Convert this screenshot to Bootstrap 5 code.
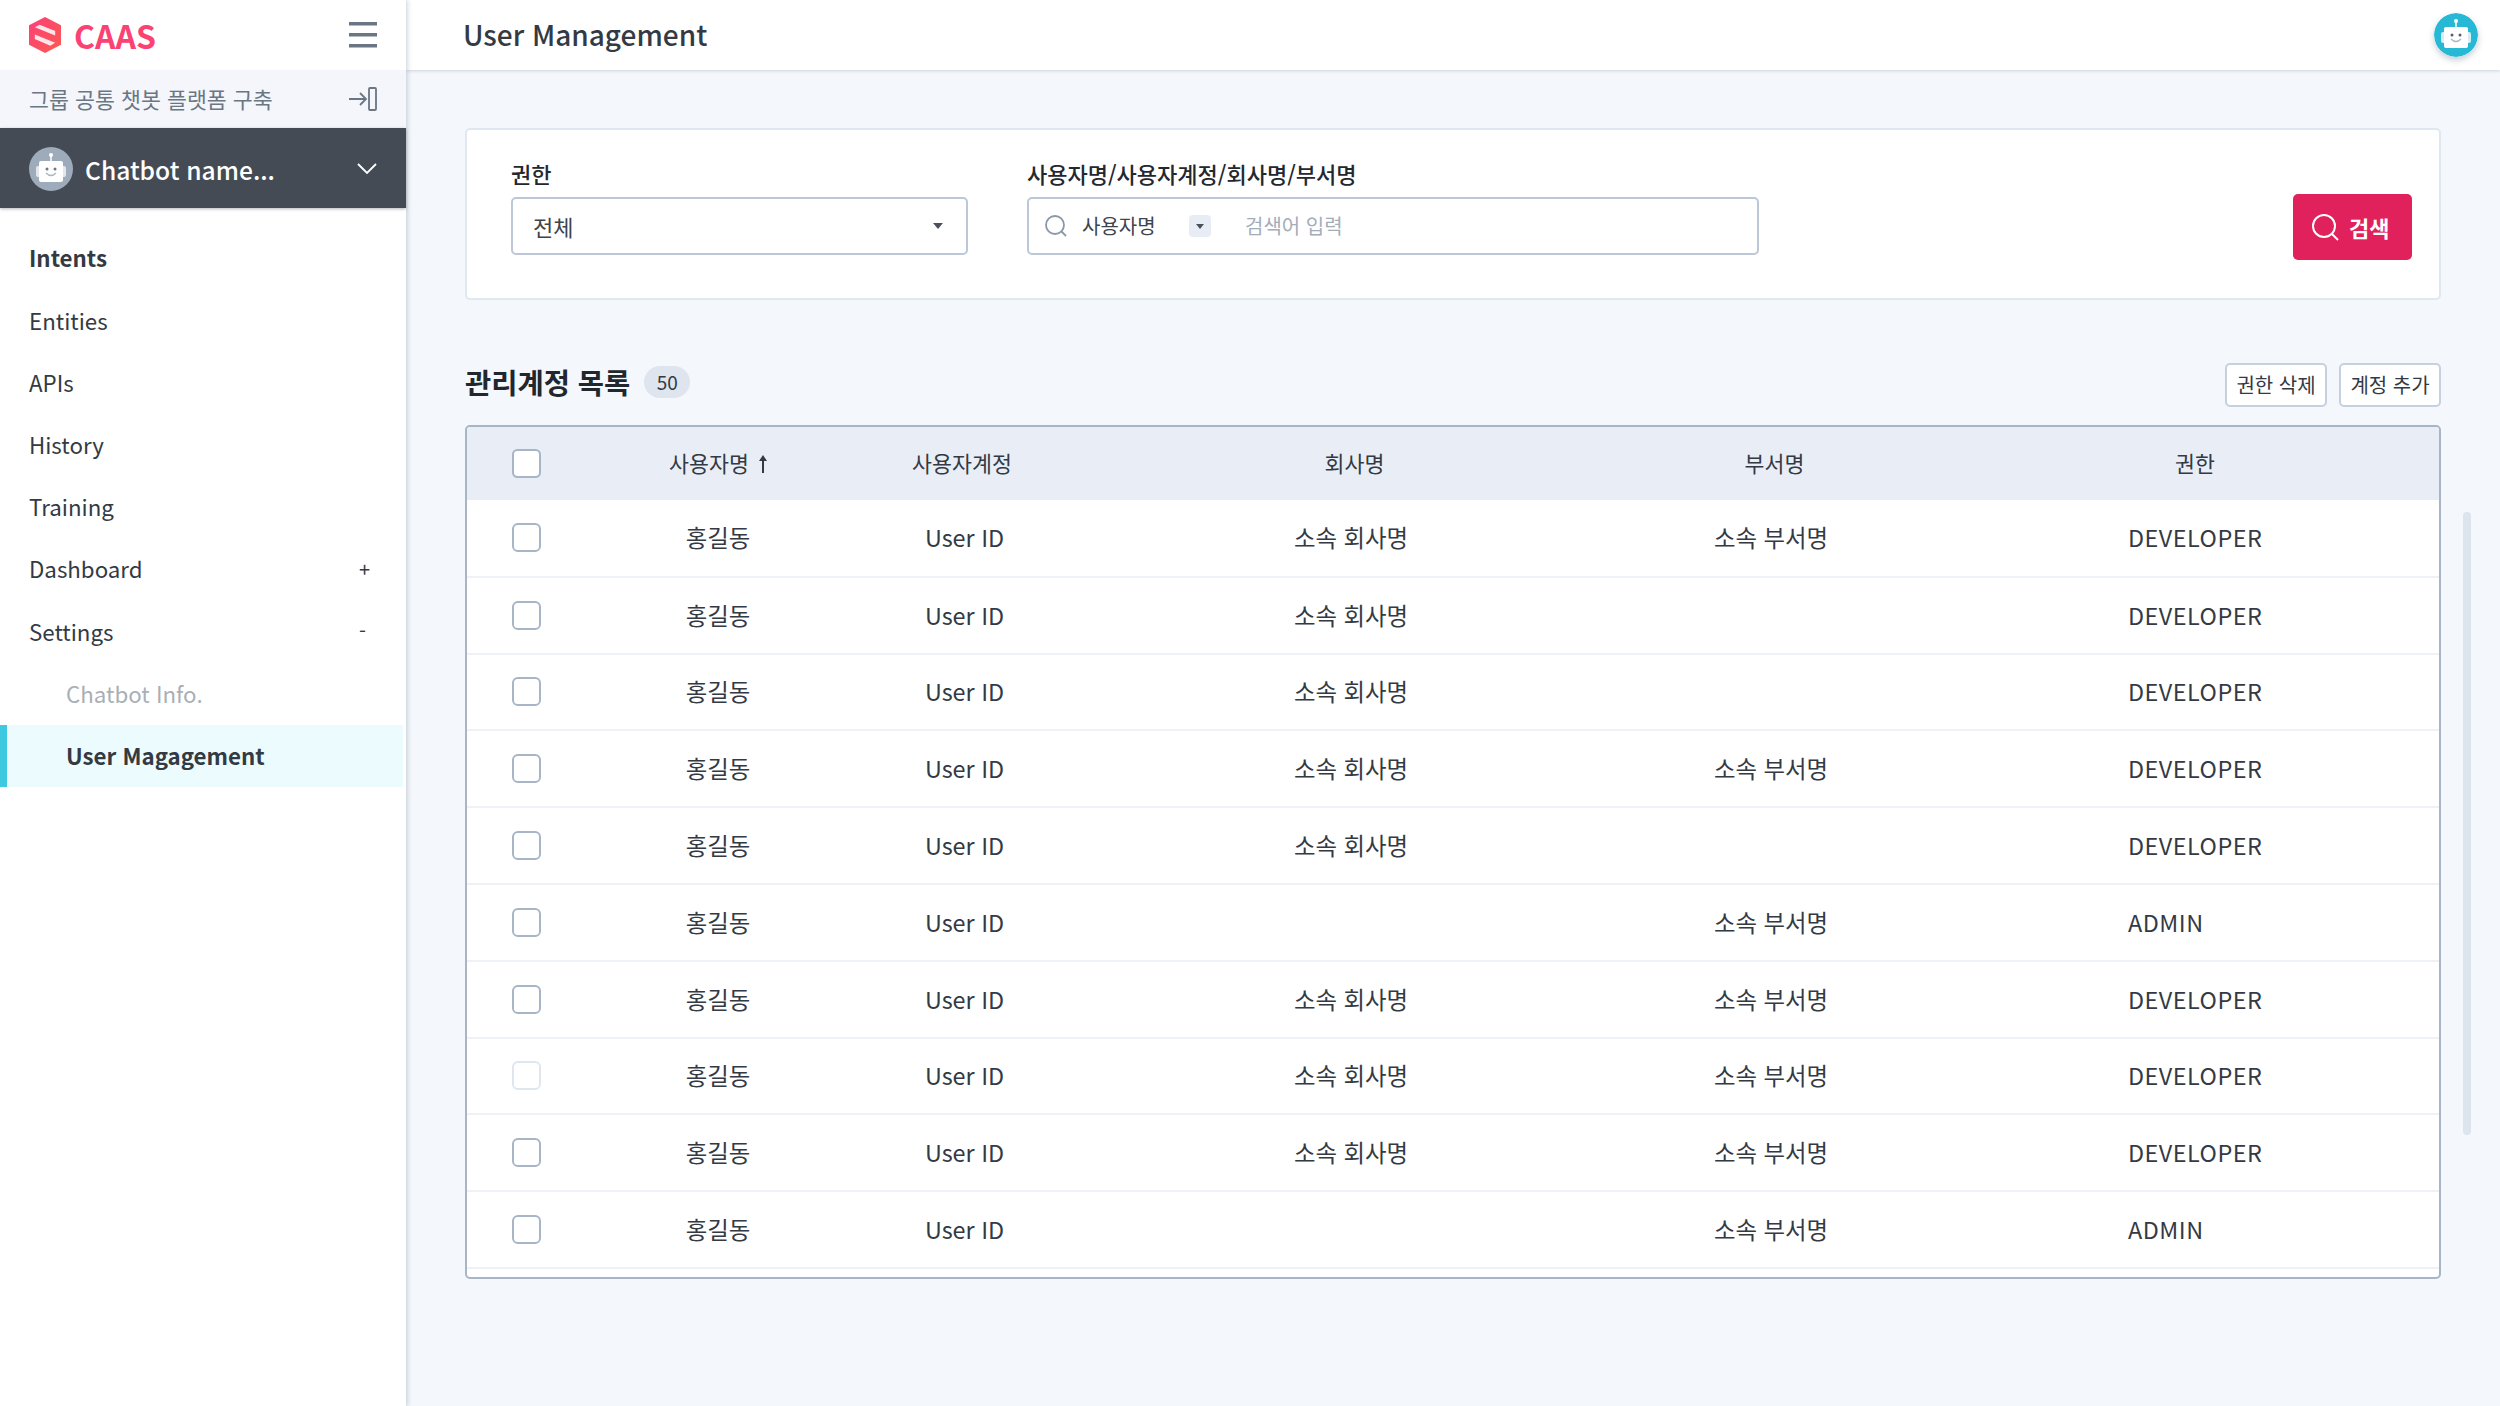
<!DOCTYPE html>
<html lang="ko">
<head>
<meta charset="utf-8">
<title>User Management</title>
<link href="https://cdn.jsdelivr.net/npm/bootstrap@5.3.0/dist/css/bootstrap.min.css" rel="stylesheet">
<style>
html,body{height:100%;}
body{font-family:"Noto Sans CJK KR","Noto Sans",sans-serif;background:#f4f7fb;color:#333a44;overflow:hidden;}
.shell{width:2500px;height:1406px;}
.side{width:406px;flex:none;background:#fff;box-shadow:2px 0 4px rgba(120,135,155,.3);z-index:3;}
.brand{height:70px;padding:0 29px;}
.brand-name{font-size:32px;font-weight:700;color:#fb4273;margin-left:13px;line-height:1;}
.project{height:58px;padding:0 29px;background:#f4f6fb;font-size:21.7px;color:#6b7683;}
.bot-pick{height:80px;padding:2px 29px 0;background:#454b55;color:#fff;font-size:24.600px;font-weight:500;box-shadow:0 1px 3px rgba(60,70,85,.4);}
.bot-pick span{margin-left:12px;}
.menu{padding-top:19px;}
.menu-row{height:62.2px;padding:0 34px 0 29px;font-size:22.3px;color:#333a44;}
.menu-row.strong{font-weight:700;}
.menu-row.sub{padding-left:66px;color:#a9afb6;}
.menu-row.on{padding-left:59px;font-weight:700;background:#ecfbfd;border-left:7px solid #3ec9e0;margin-right:3px;}
.menu-sign{font-size:20px;width:13px;text-align:left;}
.topbar{height:70px;padding:0 22px 0 57px;background:#fff;box-shadow:0 1px 3px rgba(120,135,155,.3);}
.topbar h1{font-size:28px;font-weight:500;margin:0;color:#333a44;}
.robot{width:44px;height:44px;border-radius:50%;box-shadow:0 3px 6px rgba(60,90,110,.3);flex:none;}
.work{padding:58px 59px 0 59px;position:relative;}
.filter{height:172px;background:#fff;border:2px solid #dfe7f0;border-radius:5px;padding:28px 27px 0 44px;}
.fld-a{width:457px;margin-right:59px;}
.fld-b{width:732px;}
.fld-lab{font-size:22px;font-weight:500;color:#23282f;line-height:30px;margin:0 0 9px;}
.pick,.seek{height:58px;background:#fff;border:2px solid #bcc8d8;border-radius:5px;font-size:22px;color:#3d444d;}
.pick{padding:0 23px 0 20px;}
.tri{width:0;height:0;border-left:5px solid transparent;border-right:5px solid transparent;border-top:6px solid #4a515b;}
.seek{padding:0 0 0 15px;font-size:20px;}
.seek-kind{margin-left:14px;width:107px;}
.tri-box{width:22px;height:22px;background:#e8edf5;border-radius:4px;}
.tri-box .tri{border-left-width:4px;border-right-width:4px;border-top-width:5px;}
.seek-hint{margin-left:34px;color:#a3adb9;}
.go{width:119px;height:66px;margin-left:auto;margin-top:36px;background:#e0215c;border:0;border-radius:5px;color:#fff;font-size:22px;font-weight:700;padding:0 0 0 19px;gap:10px;}
.go:hover{background:#e0215c;color:#fff;}
.list-head{margin-top:63px;height:44px;margin-bottom:18px;}
.list-head h2{font-size:28.5px;font-weight:700;color:#22272e;margin:0 0 6px;}
.tally{height:32px;width:46px;background:#dfe5ef;border-radius:16px;font-size:19px;color:#333a44;margin:0 0 6px 14px;}
.ghost{height:44px;width:102px;padding:0;background:#fff;border:2px solid #c6d1df;border-radius:5px;font-size:20px;color:#333a44;}
.grid-box{height:854px;background:#fff;border:2px solid #a7b5c7;border-radius:5px;overflow:hidden;}
.grid-box table{table-layout:fixed;width:1972px;margin:0;}
.grid-box th,.grid-box td{padding:0;text-align:center;vertical-align:middle;font-size:23.4px;color:#333a44;font-weight:400;border-bottom:2px solid #eef2f7;}
.grid-box thead th{height:73px;background:#e9eef6;font-size:21.7px;border-bottom:0;}
.grid-box tbody td{height:76.8px;}
.grid-box th:first-child,.grid-box td:first-child{text-align:left;padding-left:45px;}
.grid-box td.uid{padding-left:5px;}
.grid-box th.nudge{padding-left:5px;}
.grid-box td.firm{padding-right:2px;}
.grid-box td.role{text-align:left;padding-left:177px;letter-spacing:.5px;}
.sort-arrow{margin-left:10px;vertical-align:-1px;}
.tick{width:29px;height:29px;background:#fff;border:2px solid #a7b5c7;border-radius:4px;margin:0;display:block;}
.tick.faint{border-color:#dfe6ef;}
.thumb{position:absolute;left:2057px;top:442px;width:8px;height:623px;background:#dce4ee;border-radius:4px;}
</style>
</head>
<body>
<div class="shell d-flex">
  <aside class="side d-flex flex-column">
    <div class="brand d-flex align-items-center">
      <svg width="32" height="36" viewBox="0 0 33 37"><defs><linearGradient id="lg" x1="0" y1="0" x2="1" y2="1"><stop offset="0" stop-color="#fb3f78"/><stop offset="1" stop-color="#fd5a50"/></linearGradient></defs><path d="M16.500 0 33 8.500v20L16.500 37 0 28.500v-20z" fill="url(#lg)"/><path d="M6 10.500 11 8 27 14.500V19zM6 18 27 26.500 22 29.500 6 22.500z" fill="#fff" opacity=".85"/></svg>
      <div class="brand-name">CAAS</div>
      <svg class="ms-auto" width="28" height="26" viewBox="0 0 28 26" fill="#6a7683"><rect y="0" width="28" height="3.500"/><rect y="11" width="28" height="3.500"/><rect y="22" width="28" height="3.500"/></svg>
    </div>
    <div class="project d-flex align-items-center justify-content-between">
      <span>그룹 공통 챗봇 플랫폼 구축</span>
      <svg width="28" height="24" viewBox="0 0 28 24" fill="none" stroke="#6a7683" stroke-width="1.800"><path d="M0 12h17M11 6l6 6-6 6"/><rect x="20" y="1" width="7" height="22" rx="1"/></svg>
    </div>
    <div class="bot-pick d-flex align-items-center">
      <svg width="44" height="44" viewBox="0 0 44 44"><circle cx="22" cy="22" r="22" fill="#9dabbb"/><path d="M22 8v6" stroke="#fff" stroke-width="1.500"/><circle cx="22" cy="8" r="2" fill="#fff"/><rect x="7" y="19" width="30" height="11" rx="2" fill="#e2e7ed"/><rect x="10" y="14" width="24" height="21" rx="2" fill="#fff"/><circle cx="18" cy="22" r="1.500" fill="#6d7684"/><circle cx="26" cy="22" r="1.500" fill="#6d7684"/><path d="M17 26q5 5 10 0" stroke="#a9b6c4" stroke-width="1.300" fill="none"/></svg>
      <span>Chatbot name...</span>
      <svg class="ms-auto" width="20" height="12" viewBox="0 0 20 12" fill="none" stroke="#fff" stroke-width="1.800"><path d="M1 1l9 9 9-9"/></svg>
    </div>
    <nav class="menu">
      <div class="menu-row strong d-flex align-items-center">Intents</div>
      <div class="menu-row d-flex align-items-center">Entities</div>
      <div class="menu-row d-flex align-items-center">APIs</div>
      <div class="menu-row d-flex align-items-center">History</div>
      <div class="menu-row d-flex align-items-center">Training</div>
      <div class="menu-row d-flex align-items-center justify-content-between">Dashboard<span class="menu-sign">+</span></div>
      <div class="menu-row d-flex align-items-center justify-content-between">Settings<span class="menu-sign">-</span></div>
      <div class="menu-row sub d-flex align-items-center">Chatbot Info.</div>
      <div class="menu-row on d-flex align-items-center">User Magagement</div>
    </nav>
  </aside>
  <main class="flex-grow-1 d-flex flex-column">
    <header class="topbar d-flex align-items-center justify-content-between">
      <h1>User Management</h1>
      <svg class="robot" viewBox="0 0 44 44"><circle cx="22" cy="22" r="22" fill="#26b8d4"/><path d="M22 8v6" stroke="#fff" stroke-width="1.500"/><circle cx="22" cy="8" r="2" fill="#fff"/><rect x="7" y="19" width="30" height="11" rx="2" fill="#d5eef4"/><rect x="10" y="14" width="24" height="21" rx="2" fill="#fff"/><circle cx="18" cy="22" r="1.500" fill="#55606c"/><circle cx="26" cy="22" r="1.500" fill="#55606c"/><path d="M17 26q5 5 10 0" stroke="#a9b6c4" stroke-width="1.300" fill="none"/></svg>
    </header>
    <section class="work flex-grow-1">
      <div class="filter d-flex align-items-start">
        <div class="fld-a">
          <div class="fld-lab">권한</div>
          <div class="pick d-flex align-items-center justify-content-between"><span>전체</span><i class="tri"></i></div>
        </div>
        <div class="fld-b">
          <div class="fld-lab">사용자명/사용자계정/회사명/부서명</div>
          <div class="seek d-flex align-items-center">
            <svg width="24" height="24" viewBox="0 0 24 24" fill="none" stroke="#8a98a8" stroke-width="1.800"><circle cx="11" cy="11" r="9"/><path d="M17.500 17.500 22 22"/></svg>
            <span class="seek-kind">사용자명</span>
            <span class="tri-box d-flex align-items-center justify-content-center"><i class="tri"></i></span>
            <span class="seek-hint">검색어 입력</span>
          </div>
        </div>
        <button class="btn go d-flex align-items-center justify-content-start" type="button">
          <svg width="27" height="27" viewBox="0 0 27 27" fill="none" stroke="#fff" stroke-width="2"><circle cx="12" cy="12" r="11"/><path d="M20 20l6 6"/></svg>검색
        </button>
      </div>
      <div class="list-head d-flex align-items-center">
        <h2>관리계정 목록</h2>
        <span class="tally d-flex align-items-center justify-content-center">50</span>
        <button class="btn ghost ms-auto me-2" type="button">권한 삭제</button>
        <button class="btn ghost ms-1" type="button">계정 추가</button>
      </div>
      <div class="grid-box">
        <table class="table">
          <colgroup><col style="width:156px"><col style="width:190px"><col style="width:298px"><col style="width:482px"><col style="width:358px"><col style="width:488px"></colgroup>
          <thead>
            <tr><th><input class="form-check-input tick" type="checkbox" aria-label="all"></th><th>사용자명<svg class="sort-arrow" width="8" height="18" viewBox="0 0 8 18" fill="#333a44"><path d="M4 0 8 6H5v12H3V6H0z"/></svg></th><th>사용자계정</th><th class="nudge">회사명</th><th class="nudge">부서명</th><th>권한</th></tr>
          </thead>
          <tbody>
            <tr><td><input class="form-check-input tick" type="checkbox" aria-label="row"></td><td>홍길동</td><td class="uid">User ID</td><td class="firm">소속 회사명</td><td class="firm">소속 부서명</td><td class="role">DEVELOPER</td></tr>
            <tr><td><input class="form-check-input tick" type="checkbox" aria-label="row"></td><td>홍길동</td><td class="uid">User ID</td><td class="firm">소속 회사명</td><td></td><td class="role">DEVELOPER</td></tr>
            <tr><td><input class="form-check-input tick" type="checkbox" aria-label="row"></td><td>홍길동</td><td class="uid">User ID</td><td class="firm">소속 회사명</td><td></td><td class="role">DEVELOPER</td></tr>
            <tr><td><input class="form-check-input tick" type="checkbox" aria-label="row"></td><td>홍길동</td><td class="uid">User ID</td><td class="firm">소속 회사명</td><td class="firm">소속 부서명</td><td class="role">DEVELOPER</td></tr>
            <tr><td><input class="form-check-input tick" type="checkbox" aria-label="row"></td><td>홍길동</td><td class="uid">User ID</td><td class="firm">소속 회사명</td><td></td><td class="role">DEVELOPER</td></tr>
            <tr><td><input class="form-check-input tick" type="checkbox" aria-label="row"></td><td>홍길동</td><td class="uid">User ID</td><td></td><td class="firm">소속 부서명</td><td class="role">ADMIN</td></tr>
            <tr><td><input class="form-check-input tick" type="checkbox" aria-label="row"></td><td>홍길동</td><td class="uid">User ID</td><td class="firm">소속 회사명</td><td class="firm">소속 부서명</td><td class="role">DEVELOPER</td></tr>
            <tr><td><input class="form-check-input tick faint" type="checkbox" aria-label="row"></td><td>홍길동</td><td class="uid">User ID</td><td class="firm">소속 회사명</td><td class="firm">소속 부서명</td><td class="role">DEVELOPER</td></tr>
            <tr><td><input class="form-check-input tick" type="checkbox" aria-label="row"></td><td>홍길동</td><td class="uid">User ID</td><td class="firm">소속 회사명</td><td class="firm">소속 부서명</td><td class="role">DEVELOPER</td></tr>
            <tr><td><input class="form-check-input tick" type="checkbox" aria-label="row"></td><td>홍길동</td><td class="uid">User ID</td><td></td><td class="firm">소속 부서명</td><td class="role">ADMIN</td></tr>
          </tbody>
        </table>
      </div>
      <div class="thumb"></div>
    </section>
  </main>
</div>
<script src="https://cdn.jsdelivr.net/npm/bootstrap@5.3.0/dist/js/bootstrap.bundle.min.js"></script>
</body>
</html>
